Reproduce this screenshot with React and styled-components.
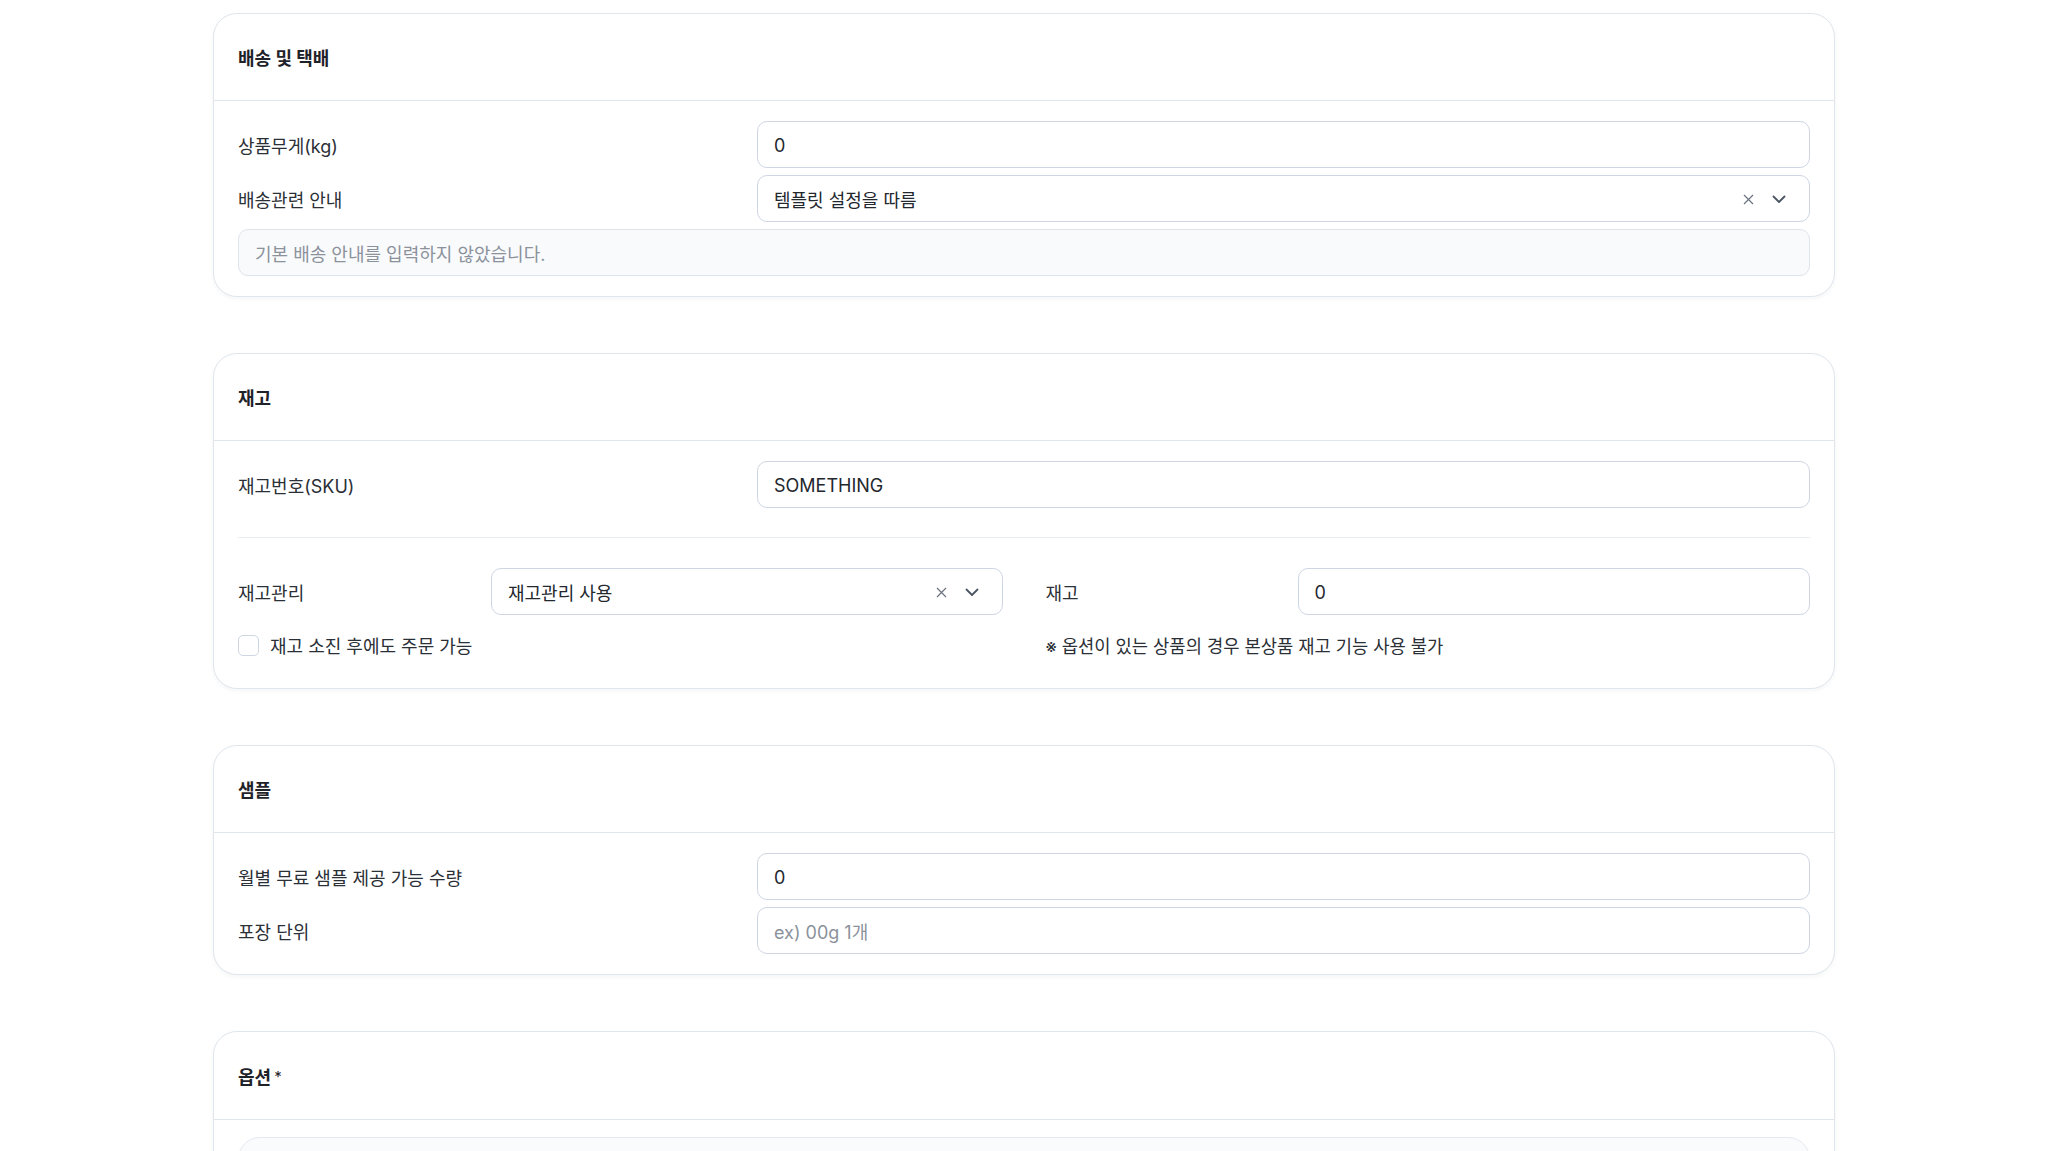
import React from "react";
import styled, { createGlobalStyle } from "styled-components";

const GlobalStyle = createGlobalStyle`
  html, body {
    margin: 0;
    padding: 0;
    background: #fff;
  }
  body {
    font-family: Inter, "Noto Sans CJK KR", "Noto Sans", sans-serif;
    color: #2b2f36;
  }
  * {
    box-sizing: border-box;
  }
`;

const Page = styled.div`
  width: 1622px;
  margin: 0 auto;
  padding-top: 13px;
  display: flex;
  flex-direction: column;
  gap: 56px;
`;

const Card = styled.section`
  background: #fff;
  border: 1px solid #dfe6ee;
  border-radius: 24px;
  box-shadow: 0 2px 4px rgba(30, 50, 80, 0.05);
`;

const CardHeader = styled.header`
  padding: 34px 24px 30px;
  border-bottom: 1px solid #dfe6ee;
  font-size: 18px;
  line-height: 22px;
  font-weight: 700;
  color: #1f2329;
`;

const Required = styled.span`
  font-weight: 400;
  font-size: 15px;
  margin-left: 3px;
  vertical-align: 2px;
`;

const CardBody = styled.div`
  padding: ${(p) => p.$pad || "20px 24px 20px"};
  display: flex;
  flex-direction: column;
  gap: ${(p) => (p.$gap != null ? p.$gap : 7)}px;
`;

const Row = styled.div`
  display: flex;
  align-items: center;
  height: 47px;
`;

const Label = styled.label`
  width: ${(p) => p.$width || 519}px;
  flex-shrink: 0;
  font-size: 18px;
  color: #2b2f36;
`;

const Field = styled.div`
  flex: 1;
  height: 47px;
  display: flex;
  align-items: center;
  padding: 1px ${(p) => (p.$select ? 23 : 16)}px 0 16px;
  border: 1px solid ${(p) => (p.$muted ? "#dde4ec" : "#cdd6e2")};
  border-radius: 10px;
  background: ${(p) => (p.$muted ? "#f9fafc" : "#fff")};
  font-size: 18px;
  color: ${(p) => (p.$placeholder ? "#8b929b" : "#23272e")};
`;

const Value = styled.span`
  flex: 1;
`;

const Icons = styled.div`
  display: flex;
  align-items: center;
  gap: 18px;
`;

const Divider = styled.div`
  height: 1px;
  background: #e8eef4;
  margin: 29px 0 30px;
`;

const Half = styled.div`
  flex: 1;
  display: flex;
  align-items: center;
`;

const HalfRow = styled.div`
  display: flex;
  gap: 43px;
`;

const HalfCol = styled.div`
  flex: 1;
  display: flex;
  flex-direction: column;
  gap: 18px;
`;

const CheckLine = styled.div`
  display: flex;
  align-items: center;
  height: 24px;
  gap: 11px;
  font-size: 18px;
  color: #2b2f36;
`;

const Box = styled.span`
  width: 21px;
  height: 21px;
  border: 1px solid #cdd6e2;
  border-radius: 5px;
  background: #fff;
`;

const Note = styled.div`
  height: 24px;
  display: flex;
  align-items: center;
  font-size: 17.7px;
  color: #2b2f36;
`;

const InnerPanel = styled.div`
  height: 120px;
  border: 1px solid #e3e9f0;
  border-radius: 22px;
  background: #fafbfd;
`;

function ClearIcon() {
  return (
    <svg width="11" height="11" viewBox="0 0 11 11">
      <path d="M1 1L10 10M10 1L1 10" stroke="#6b7280" strokeWidth="1.2" fill="none" />
    </svg>
  );
}

function ChevronIcon() {
  return (
    <svg width="14" height="9" viewBox="0 0 14 9">
      <path d="M1.5 1.5L7 7L12.5 1.5" stroke="#4b5563" strokeWidth="1.8" fill="none" strokeLinecap="round" strokeLinejoin="round" />
    </svg>
  );
}

function Select({ value }) {
  return (
    <Field $select>
      <Value>{value}</Value>
      <Icons>
        <ClearIcon />
        <ChevronIcon />
      </Icons>
    </Field>
  );
}

export default function App() {
  return (
    <>
      <GlobalStyle />
      <Page>
        <Card>
          <CardHeader>배송 및 택배</CardHeader>
          <CardBody>
            <Row>
              <Label>상품무게(kg)</Label>
              <Field>0</Field>
            </Row>
            <Row>
              <Label>배송관련 안내</Label>
              <Select value="템플릿 설정을 따름" />
            </Row>
            <Row>
              <Field $muted $placeholder>기본 배송 안내를 입력하지 않았습니다.</Field>
            </Row>
          </CardBody>
        </Card>

        <Card>
          <CardHeader>재고</CardHeader>
          <CardBody $pad="20px 24px 31px" $gap={0}>
            <Row>
              <Label>재고번호(SKU)</Label>
              <Field>SOMETHING</Field>
            </Row>
            <Divider />
            <HalfRow>
              <HalfCol>
                <Half>
                  <Label $width={253}>재고관리</Label>
                  <Select value="재고관리 사용" />
                </Half>
                <CheckLine>
                  <Box />
                  재고 소진 후에도 주문 가능
                </CheckLine>
              </HalfCol>
              <HalfCol>
                <Half>
                  <Label $width={252}>재고</Label>
                  <Field>0</Field>
                </Half>
                <Note>※ 옵션이 있는 상품의 경우 본상품 재고 기능 사용 불가</Note>
              </HalfCol>
            </HalfRow>
          </CardBody>
        </Card>

        <Card>
          <CardHeader>샘플</CardHeader>
          <CardBody>
            <Row>
              <Label>월별 무료 샘플 제공 가능 수량</Label>
              <Field>0</Field>
            </Row>
            <Row>
              <Label>포장 단위</Label>
              <Field $placeholder>ex) 00g 1개</Field>
            </Row>
          </CardBody>
        </Card>

        <Card>
          <CardHeader>
            옵션<Required>*</Required>
          </CardHeader>
          <CardBody $pad="17px 24px 20px">
            <InnerPanel />
          </CardBody>
        </Card>
      </Page>
    </>
  );
}
